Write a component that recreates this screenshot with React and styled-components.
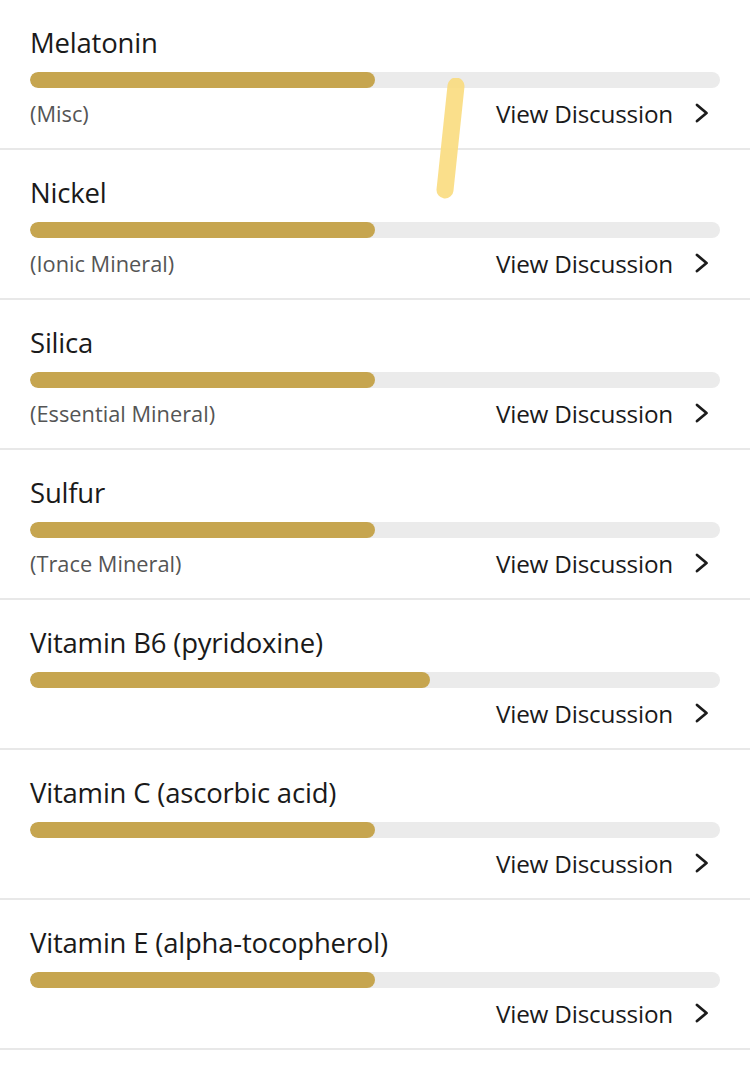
import React from 'react';
import styled, { createGlobalStyle } from 'styled-components';

const GlobalStyle = createGlobalStyle`
  * { box-sizing: border-box; }
  body {
    margin: 0;
    background: #ffffff;
    font-family: "Open Sans", "Noto Sans", sans-serif;
  }
`;

const items = [
  { name: 'Melatonin', group: '(Misc)', level: 50 },
  { name: 'Nickel', group: '(Ionic Mineral)', level: 50 },
  { name: 'Silica', group: '(Essential Mineral)', level: 50 },
  { name: 'Sulfur', group: '(Trace Mineral)', level: 50 },
  { name: 'Vitamin B6 (pyridoxine)', group: '', level: 58 },
  { name: 'Vitamin C (ascorbic acid)', group: '', level: 50 },
  { name: 'Vitamin E (alpha-tocopherol)', group: '', level: 50 },
];

function Chevron() {
  return (
    <svg width="16" height="22" viewBox="0 0 16 22" fill="none">
      <path d="M3 3 L12.5 11 L3 19" stroke="#1c1c1c" strokeWidth="2.8" strokeLinecap="round" strokeLinejoin="round" />
    </svg>
  );
}

function App() {
  return (
    <Page>
      <GlobalStyle />
      {items.map(item => (
        <Row key={item.name}>
          <Title>{item.name}</Title>
          <Track>
            <Fill style={{ width: `${item.level}%` }} />
          </Track>
          <Footer>
            <Group>{item.group}</Group>
            <Link>
              View Discussion
              <Chevron />
            </Link>
          </Footer>
        </Row>
      ))}
      <Marker width="40" height="130" viewBox="0 0 40 130">
        <path d="M28 8 L17 112" stroke="#f9dc7e" strokeOpacity="0.9" strokeWidth="17" strokeLinecap="round" />
      </Marker>
    </Page>
  );
}

const Page = styled.main`
  position: relative;
  width: 750px;
  min-height: 1066px;
`;

const Row = styled.section`
  padding: 25px 30px 17px;
  border-bottom: 2px solid #e8e8e8;
`;

const Title = styled.h3`
  margin: 0;
  height: 36px;
  line-height: 36px;
  font-size: 27.5px;
  font-weight: 400;
  color: #1a1a1a;
  letter-spacing: -0.2px;
`;

const Track = styled.div`
  margin-top: 11px;
  height: 16px;
  border-radius: 8px;
  background: #ebebeb;
  overflow: hidden;
`;

const Fill = styled.div`
  height: 100%;
  border-radius: 8px;
  background: #c6a54f;
`;

const Footer = styled.div`
  margin-top: 7px;
  height: 36px;
  display: flex;
  align-items: center;
  justify-content: space-between;
`;

const Group = styled.span`
  font-size: 21.8px;
  color: #555555;
`;

const Link = styled.span`
  display: flex;
  align-items: center;
  gap: 21px;
  padding-right: 10px;
  font-size: 24.3px;
  color: #1a1a1a;
  letter-spacing: -0.2px;
`;

const Marker = styled.svg`
  position: absolute;
  left: 428px;
  top: 78px;
  pointer-events: none;
`;

export default App;
